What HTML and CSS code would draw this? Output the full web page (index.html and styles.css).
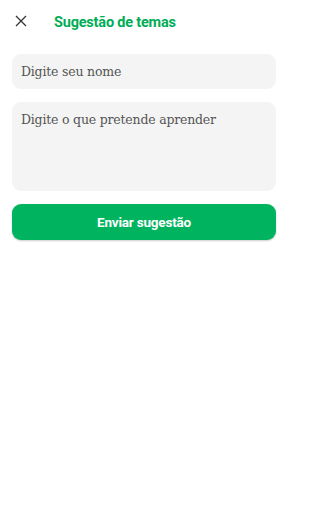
FILE: index.html
```html
<!DOCTYPE html>
<html lang="pt">
<head>
<meta charset="utf-8">
<link rel="stylesheet" href="styles.css">
</head>
<body>
<header class="bar">
  <svg class="close" width="12" height="12" viewBox="0 0 12 12"><path d="M1 1L11 11M11 1L1 11" stroke="#333" stroke-width="1.3" fill="none"/></svg>
  <h1 class="title">Sugestão de temas</h1>
</header>
<main class="form">
  <div class="field">Digite seu nome</div>
  <div class="field area">Digite o que pretende aprender</div>
  <button class="send">Enviar sugestão</button>
</main>
</body>
</html>
```
FILE: styles.css
```css
html, body { margin: 0; padding: 0; background: #fff; }
body { width: 288px; height: 512px; font-family: "Roboto", sans-serif; }
.bar { display: flex; align-items: center; height: 44px; padding-left: 15px; }
.close { display: block; margin-bottom: 2px; }
.title { margin: 0 0 0 27px; font-family: "Roboto", sans-serif; font-weight: 700; font-size: 14.5px; line-height: normal; color: #00ad56; letter-spacing: -0.2px; }
.form { display: flex; flex-direction: column; padding: 10px 12px 0; gap: 13px; }
.field { background: #f4f4f4; border-radius: 9px; height: 35px; box-sizing: border-box; padding: 9.5px 9px 0; font-family: "DejaVu Serif", serif; font-size: 12.5px; line-height: 16px; letter-spacing: -0.2px; color: #555; }
.area { height: 89px; padding-top: 10px; }
.send { height: 36px; border: 0; border-radius: 9px; background: #00b35e; color: #fff; font-family: "Roboto", sans-serif; font-weight: 700; font-size: 13.5px; letter-spacing: -0.2px; box-shadow: 0 1px 2px rgba(0,0,0,0.2); }
```
